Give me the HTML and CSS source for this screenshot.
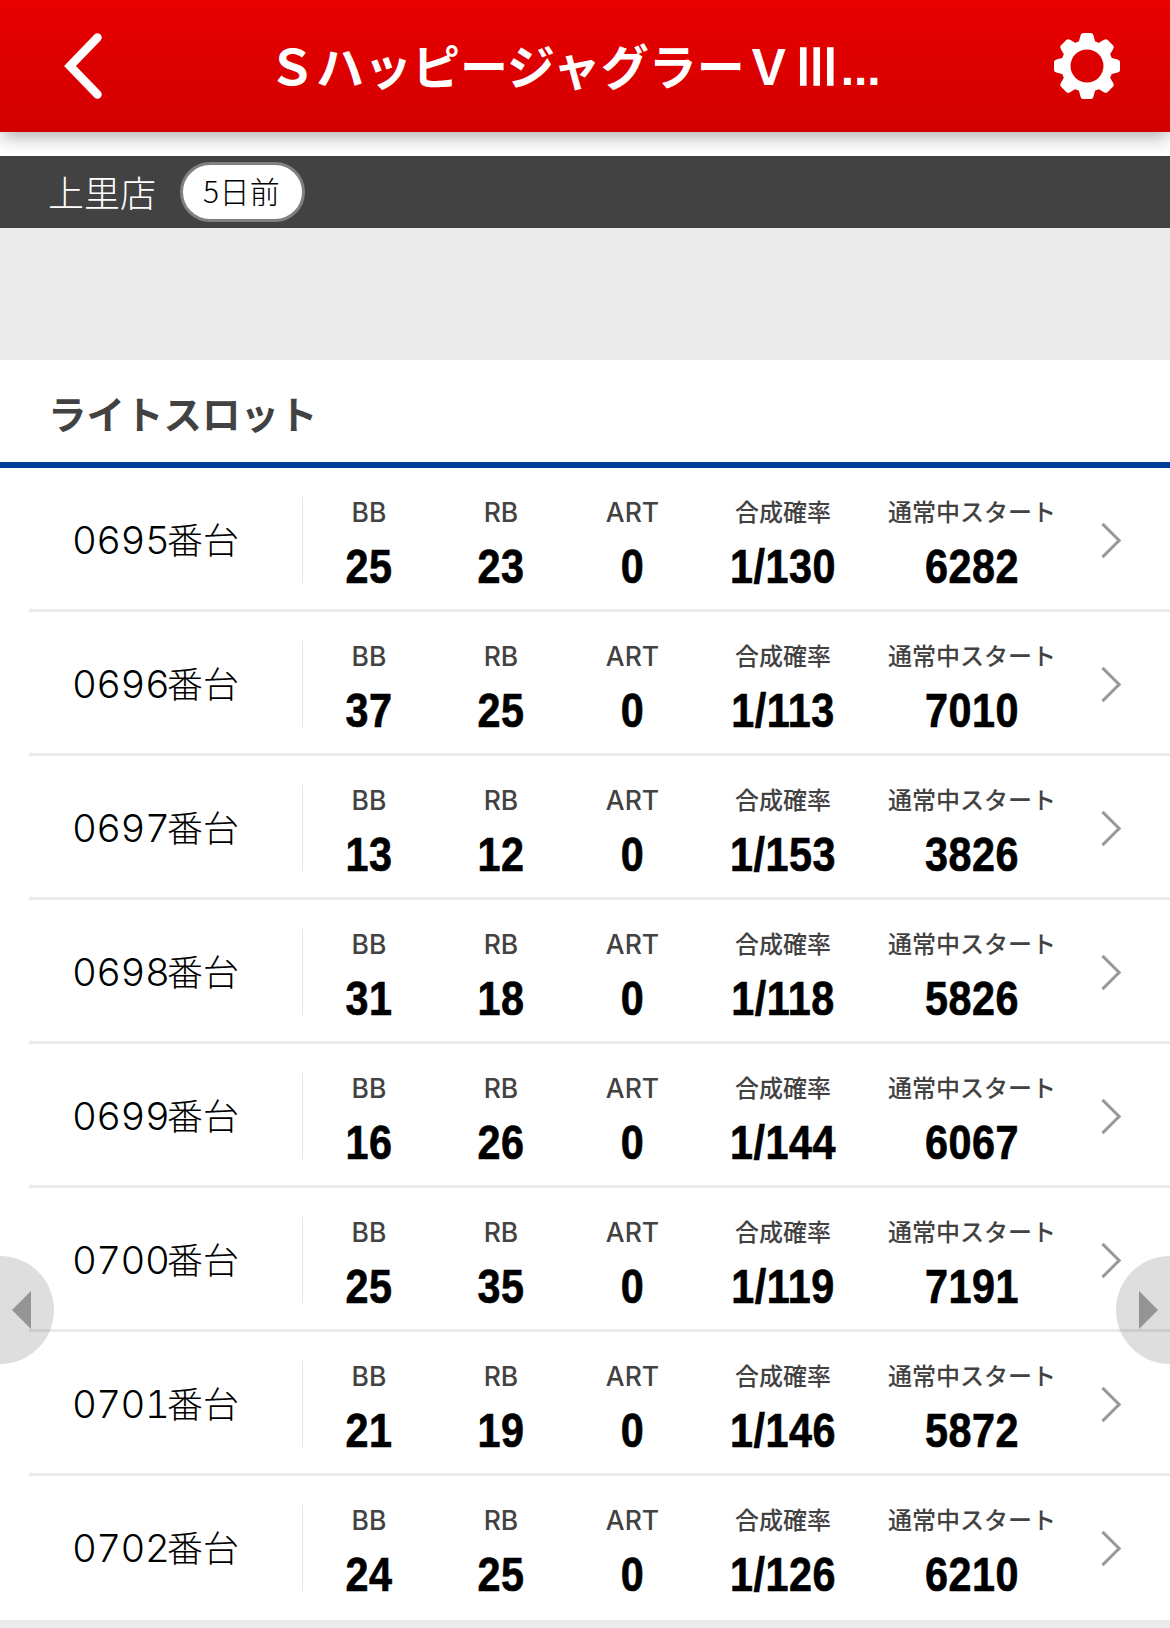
FILE: index.html
```html
<!doctype html>
<html lang="ja">
  <head>
    <meta charset="utf-8">
    <meta name="viewport" content="width=device-width, initial-scale=1">
    <title>&#xFF33;ハッピージャグラー&#xFF36;III</title>
    <link rel="stylesheet" href="styles.css">
  </head>
  <body>
    <header class="header">
      <a class="back" href="#">
        <svg width="40" height="68" viewBox="0 0 40 68"><path d="M34.5 5.500L7 34L34.500 62.500" fill="none" stroke="#fff" stroke-width="8.500" stroke-linecap="round" stroke-linejoin="miter"/></svg>
      </a>
      <h1 class="title">&#xFF33;ハッピージャグラー&#xFF36;<span class="roman">III</span><span class="dots">...</span></h1>
      <a class="setting" href="#">
        <svg width="68" height="68" viewBox="-34 -34 68 68">
          <g fill="#fff">
            <g id="teeth">
              <path id="tooth" d="M-8.500 -23L-6.500 -30.500Q-6 -33 -4 -33H4Q6 -33 6.500 -30.500L8.500 -23V23L6.500 30.500Q6 33 4 33H-4Q-6 33 -6.500 30.500L-8.500 23Z"/>
              <use href="#tooth" transform="rotate(90)"/>
            </g>
            <use href="#teeth" transform="rotate(45)"/>
            <circle r="26"/>
          </g>
          <circle r="16.500" fill="#dc0000"/>
        </svg>
      </a>
    </header>

    <div class="store">
      <span class="store_name">上里店</span>
      <span class="day">5日前</span>
    </div>

    <div class="space"></div>

    <h2 class="category">ライトスロット</h2>

    <ul class="list">
      <li class="machine">
        <p class="number"><span>0695</span>番台</p>
        <dl class="data">
          <div><dt class="en">BB</dt><dd>25</dd></div>
          <div><dt class="en">RB</dt><dd>23</dd></div>
          <div><dt class="en">ART</dt><dd>0</dd></div>
          <div><dt>合成確率</dt><dd>1/130</dd></div>
          <div><dt>通常中スタート</dt><dd>6282</dd></div>
        </dl>
        <i class="arrow"></i>
      </li>
      <li class="machine">
        <p class="number"><span>0696</span>番台</p>
        <dl class="data">
          <div><dt class="en">BB</dt><dd>37</dd></div>
          <div><dt class="en">RB</dt><dd>25</dd></div>
          <div><dt class="en">ART</dt><dd>0</dd></div>
          <div><dt>合成確率</dt><dd>1/113</dd></div>
          <div><dt>通常中スタート</dt><dd>7010</dd></div>
        </dl>
        <i class="arrow"></i>
      </li>
      <li class="machine">
        <p class="number"><span>0697</span>番台</p>
        <dl class="data">
          <div><dt class="en">BB</dt><dd>13</dd></div>
          <div><dt class="en">RB</dt><dd>12</dd></div>
          <div><dt class="en">ART</dt><dd>0</dd></div>
          <div><dt>合成確率</dt><dd>1/153</dd></div>
          <div><dt>通常中スタート</dt><dd>3826</dd></div>
        </dl>
        <i class="arrow"></i>
      </li>
      <li class="machine">
        <p class="number"><span>0698</span>番台</p>
        <dl class="data">
          <div><dt class="en">BB</dt><dd>31</dd></div>
          <div><dt class="en">RB</dt><dd>18</dd></div>
          <div><dt class="en">ART</dt><dd>0</dd></div>
          <div><dt>合成確率</dt><dd>1/118</dd></div>
          <div><dt>通常中スタート</dt><dd>5826</dd></div>
        </dl>
        <i class="arrow"></i>
      </li>
      <li class="machine">
        <p class="number"><span>0699</span>番台</p>
        <dl class="data">
          <div><dt class="en">BB</dt><dd>16</dd></div>
          <div><dt class="en">RB</dt><dd>26</dd></div>
          <div><dt class="en">ART</dt><dd>0</dd></div>
          <div><dt>合成確率</dt><dd>1/144</dd></div>
          <div><dt>通常中スタート</dt><dd>6067</dd></div>
        </dl>
        <i class="arrow"></i>
      </li>
      <li class="machine">
        <p class="number"><span>0700</span>番台</p>
        <dl class="data">
          <div><dt class="en">BB</dt><dd>25</dd></div>
          <div><dt class="en">RB</dt><dd>35</dd></div>
          <div><dt class="en">ART</dt><dd>0</dd></div>
          <div><dt>合成確率</dt><dd>1/119</dd></div>
          <div><dt>通常中スタート</dt><dd>7191</dd></div>
        </dl>
        <i class="arrow"></i>
      </li>
      <li class="machine">
        <p class="number"><span>0701</span>番台</p>
        <dl class="data">
          <div><dt class="en">BB</dt><dd>21</dd></div>
          <div><dt class="en">RB</dt><dd>19</dd></div>
          <div><dt class="en">ART</dt><dd>0</dd></div>
          <div><dt>合成確率</dt><dd>1/146</dd></div>
          <div><dt>通常中スタート</dt><dd>5872</dd></div>
        </dl>
        <i class="arrow"></i>
      </li>
      <li class="machine">
        <p class="number"><span>0702</span>番台</p>
        <dl class="data">
          <div><dt class="en">BB</dt><dd>24</dd></div>
          <div><dt class="en">RB</dt><dd>25</dd></div>
          <div><dt class="en">ART</dt><dd>0</dd></div>
          <div><dt>合成確率</dt><dd>1/126</dd></div>
          <div><dt>通常中スタート</dt><dd>6210</dd></div>
        </dl>
        <i class="arrow"></i>
      </li>
    </ul>

    <!-- previous / next day buttons -->
    <a class="pager prev" href="#"></a>
    <a class="pager next" href="#"></a>
  </body>
</html>
```
FILE: styles.css
```css
*{
  box-sizing: border-box;
}
body{
  margin: 0;
  height: 1628px;
  overflow: hidden;
  background: #ebebeb;
  color: #000;
  font-family: "Noto Sans CJK JP", sans-serif;
}
h1, h2, p, ul, dl, dd{
  margin: 0;
  padding: 0;
}
/* Header */
.header{
  display: flex;
  align-items: center;
  height: 132px;
  padding: 0 49px 0 63px;
  background: linear-gradient(#e80000, #d20000);
  box-shadow: 0 6px 18px -2px rgba(0,0,0,0.35);
  position: relative;
}
.back, .setting{
  display: flex;
}
.setting{
  margin-left: auto;
}
.title{
  margin-left: 165px;
  color: #fff;
  font-size: 48px;
  font-weight: 700;
  line-height: 130px;
  white-space: nowrap;
}
/* narrow strokes of the roman numeral, one full-width cell */
.roman{
  display: inline-block;
  width: 48px;
  padding-left: 3px;
  font-family: "Liberation Sans", sans-serif;
  font-size: 54px;
  font-weight: 400;
  letter-spacing: -1.500px;
  -webkit-text-stroke: 1.500px #fff;
}
.dots{
  font-family: "Liberation Sans", sans-serif;
}
/* Store name and day */
.store{
  display: flex;
  align-items: center;
  gap: 24px;
  height: 96px;
  padding: 0 48px;
  border-top: 24px solid #fff;
  background: #424242;
}
.store_name{
  padding-bottom: 3px;
  color: #fff;
  font-size: 36px;
  font-weight: 300;
}
.day{
  width: 125px;
  height: 60px;
  padding-right: 2px;
  border: 3px solid #808080;
  border-radius: 30px;
  background: #fff;
  font-size: 30px;
  font-weight: 300;
  letter-spacing: 0.300px;
  line-height: 51px;
  text-align: center;
}
.space{
  height: 132px;
}
.category{
  height: 108px;
  padding-left: 48px;
  border-bottom: 6px solid #003f98;
  background: #fff;
  color: #424242;
  font-size: 38.5px;
  font-weight: 700;
  line-height: 105px;
}
/* Machine list */
.list{
  list-style: none;
  padding-left: 29px;
  background: #fff;
}
.machine{
  display: flex;
  align-items: center;
  height: 144px;
  padding: 0 54px 0 43px;
  border-bottom: 3px solid #ebebeb;
}
.machine:last-child{
  border-bottom-color: #fff;
}
.number{
  width: 230px;
  font-size: 36px;
  font-weight: 300;
  line-height: 86px;
  white-space: nowrap;
}
.number span{
  display: inline-block;
  width: 95px;
  font-family: Inter, sans-serif;
  font-size: 38.500px;
  font-variant-numeric: tabular-nums;
  letter-spacing: -0.600px;
}
.data{
  display: grid;
  grid-template-columns: 132px 132px 131px 170px 208px;
  height: 86px;
  border-left: 1px solid #e6e6e6;
  margin-top: 3px;
  text-align: center;
}
.data dt{
  height: 30px;
  color: #424242;
  font-size: 24px;
  font-weight: 500;
  line-height: 28px;
}
.data .en{
  font-family: Inter, sans-serif;
  font-size: 26.5px;
  line-height: 30px;
}
.data dd{
  font-family: "Liberation Sans Narrow", "Liberation Sans", sans-serif;
  font-size: 48px;
  font-weight: 700;
  line-height: 80px;
  letter-spacing: 0.600px;
  transform: scaleX(0.86);
  -webkit-text-stroke: 0.700px #000;
}
.arrow{
  width: 25px;
  height: 25px;
  margin: 3px 0 0 auto;
  border: solid #999;
  border-width: 3px 3px 0 0;
  transform: rotate(45deg);
}
/* Half circles at both screen edges */
.pager{
  position: fixed;
  top: 1256px;
  width: 54px;
  height: 108px;
  display: flex;
  align-items: center;
  background: rgba(0,0,0,0.13);
}
.pager:before{
  content: "";
  border: solid transparent;
  border-width: 19px 0;
}
.prev{
  left: 0;
  padding-left: 12px;
  border-radius: 0 54px 54px 0;
}
.prev:before{
  border-right: 19px solid #949494;
}
.next{
  right: 0;
  padding-left: 23px;
  border-radius: 54px 0 0 54px;
}
.next:before{
  border-left: 19px solid #949494;
}
```
